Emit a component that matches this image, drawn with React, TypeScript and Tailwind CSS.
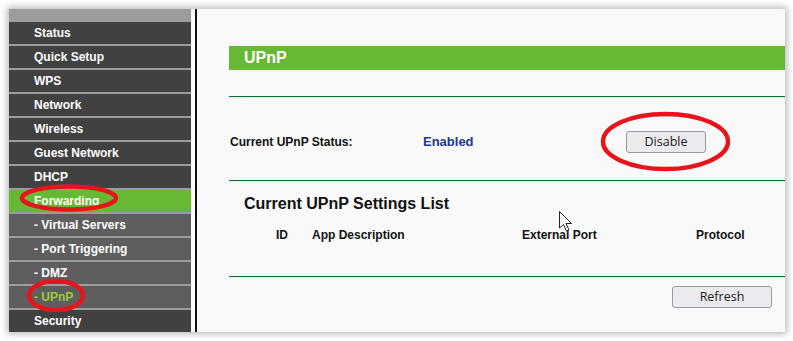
const menu = [
  { label: 'Status' },
  { label: 'Quick Setup' },
  { label: 'WPS' },
  { label: 'Network' },
  { label: 'Wireless' },
  { label: 'Guest Network' },
  { label: 'DHCP' },
  { label: 'Forwarding', active: true },
  { label: '- Virtual Servers', sub: true },
  { label: '- Port Triggering', sub: true },
  { label: '- DMZ', sub: true },
  { label: '- UPnP', sub: true, current: true },
  { label: 'Security' },
];

const font = { fontFamily: '"Liberation Sans", Arial, sans-serif' };

const GreenRule = () => (
  <div className="flex flex-col">
    <div className="h-px bg-[#0b7339]" />
    <div className="h-px bg-[#dde8de]" />
  </div>
);

const Sidebar = () => (
  <div className="w-[182px] flex flex-col gap-[2px] pt-[13px] bg-[#9c9c9c]">
    {menu.map((item) => {
      let bg = 'bg-[#414141]';
      if (item.sub) bg = 'bg-[#5e5e5e]';
      if (item.active) bg = 'bg-[#67b934]';
      return (
        <div
          key={item.label}
          className={`h-[22px] flex items-center pl-[25px] text-[12px] font-bold ${bg} ${
            item.current ? 'text-[#9ccc3a]' : 'text-white'
          }`}
        >
          {item.label}
        </div>
      );
    })}
  </div>
);

const Button = ({ label, width }: { label: string; width: string }) => (
  <button
    className={`${width} h-[22px] rounded-[3px] border border-[#9a9a9a] bg-[#ebebef] text-[12.5px] text-[#1a1a1a] flex items-center justify-center`}
    style={{ fontFamily: '"Open Sans", "Noto Sans", sans-serif' }}
  >
    {label}
  </button>
);

export default function App() {
  return (
    <div className="relative w-[793px] h-[341px] bg-white pt-[9px] pl-[9px]" style={font}>
      <div className="w-[776px] h-[323px] flex bg-[#f9f9f9] shadow-[0_0_7px_2px_rgba(0,0,0,0.28)]">
        <Sidebar />
        <div className="w-[4px] bg-[#fafafa]" />
        <div className="w-[2px] bg-[#111]" />
        <div className="flex-1 flex flex-col pl-[32px] pt-[37px] bg-[#f9f9f9]">
          <div className="h-[24px] bg-[#67b934] flex items-center pl-[15px] text-white text-[16px] font-bold">
            UPnP
          </div>
          <div className="h-[26px]" />
          <GreenRule />
          <div className="flex items-center pt-[33px] pb-[27px] pl-[1px]">
            <div className="w-[193px] text-[12px] font-bold text-[#111]">Current UPnP Status:</div>
            <div className="w-[203px] text-[13px] font-bold text-[#1c3a8c]">Enabled</div>
            <Button label="Disable" width="w-[80px]" />
          </div>
          <GreenRule />
          <div className="h-[20px] mt-[12px] pl-[15px] flex items-center text-[16px] font-bold text-[#111]">
            Current UPnP Settings List
          </div>
          <div className="h-[20px] mt-[11px] pl-[47px] flex items-center text-[12px] font-bold text-[#111]">
            <div className="w-[36px]">ID</div>
            <div className="w-[210px]">App Description</div>
            <div className="w-[174px]">External Port</div>
            <div>Protocol</div>
          </div>
          <div className="h-[31px]" />
          <GreenRule />
          <div className="flex justify-end pr-[13px] mt-[8px]">
            <Button label="Refresh" width="w-[100px]" />
          </div>
        </div>
      </div>

      <svg
        className="absolute left-0 top-0 pointer-events-none"
        width="793"
        height="341"
        viewBox="0 0 793 341"
      >
        <g fill="none" stroke="#e8141c" strokeWidth="4.5">
          <ellipse cx="69" cy="198" rx="47" ry="11.5" />
          <ellipse cx="56" cy="295.5" rx="27" ry="14.5" />
          <ellipse cx="665.5" cy="141.5" rx="62.5" ry="27.5" />
        </g>
        <path
          d="M559.5 211.5 L559.5 228 L563.5 224.5 L566.5 231 L569 230 L566 223.5 L571.5 223.5 Z"
          fill="#fff"
          stroke="#222"
          strokeWidth="1"
          strokeLinejoin="round"
        />
      </svg>
    </div>
  );
}
